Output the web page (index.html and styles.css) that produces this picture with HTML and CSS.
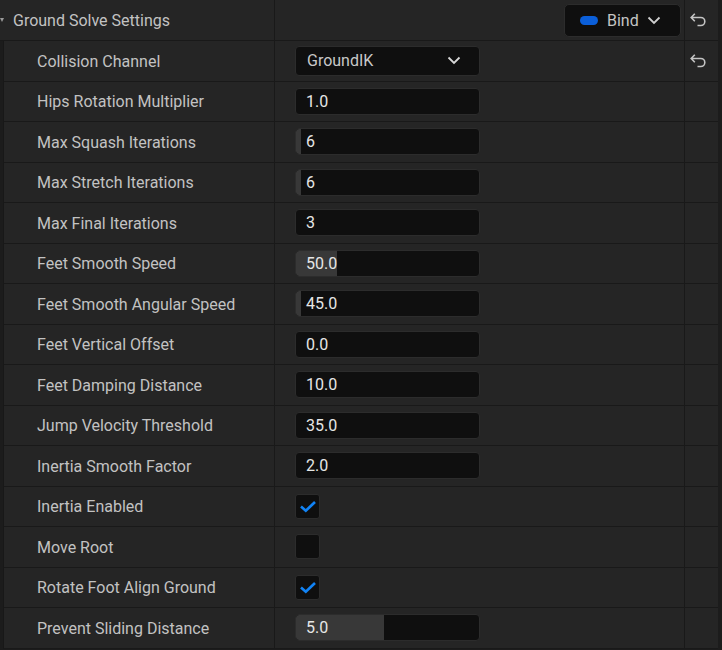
FILE: index.html
```html
<!DOCTYPE html>
<html>
<head>
<meta charset="utf-8">
<link rel="stylesheet" href="styles.css">
</head>
<body>
<div class="panel">
  <div class="row header">
    <div class="name-cell head-name"><span class="caret"></span>Ground Solve Settings</div>
    <div class="value-cell head-value">
      <div class="bind"><span class="pill"></span><span class="bind-text">Bind</span>
        <svg class="chev" width="14" height="9" viewBox="0 0 14 9"><path d="M1.5 1.5 L7 7 L12.5 1.5" fill="none" stroke="#d0d0d0" stroke-width="1.8"/></svg>
      </div>
    </div>
    <div class="reset-cell">
      <svg width="16" height="14" viewBox="0 0 16 14"><path d="M4.8 0.8 L1.2 4.5 L4.8 8.2 M1.2 4.5 H10.8 A4 4 0 0 1 10.8 12.5 H7.5" fill="none" stroke="#c4c4c4" stroke-width="1.6"/></svg>
    </div>
  </div>
  <div class="rows">
    <div class="row prop">
      <div class="name-cell">Collision Channel</div>
      <div class="value-cell"><div class="combo"><span>GroundIK</span>
        <svg width="14" height="9" viewBox="0 0 14 9"><path d="M1.5 1.5 L7 7 L12.5 1.5" fill="none" stroke="#d8d8d8" stroke-width="1.8"/></svg></div></div>
      <div class="reset-cell">
        <svg width="16" height="14" viewBox="0 0 16 14"><path d="M4.8 0.8 L1.2 4.5 L4.8 8.2 M1.2 4.5 H10.8 A4 4 0 0 1 10.8 12.5 H7.5" fill="none" stroke="#c4c4c4" stroke-width="1.6"/></svg>
      </div>
    </div>
    <div class="row prop"><div class="name-cell">Hips Rotation Multiplier</div><div class="value-cell"><div class="num"><span class="val">1.0</span></div></div><div class="reset-cell"></div></div>
    <div class="row prop"><div class="name-cell">Max Squash Iterations</div><div class="value-cell"><div class="num"><span class="fill" style="width:5px"></span><span class="val">6</span></div></div><div class="reset-cell"></div></div>
    <div class="row prop"><div class="name-cell">Max Stretch Iterations</div><div class="value-cell"><div class="num"><span class="fill" style="width:5px"></span><span class="val">6</span></div></div><div class="reset-cell"></div></div>
    <div class="row prop"><div class="name-cell">Max Final Iterations</div><div class="value-cell"><div class="num"><span class="val">3</span></div></div><div class="reset-cell"></div></div>
    <div class="row prop"><div class="name-cell">Feet Smooth Speed</div><div class="value-cell"><div class="num"><span class="fill" style="width:41px"></span><span class="val">50.0</span></div></div><div class="reset-cell"></div></div>
    <div class="row prop"><div class="name-cell">Feet Smooth Angular Speed</div><div class="value-cell"><div class="num"><span class="fill" style="width:5px"></span><span class="val">45.0</span></div></div><div class="reset-cell"></div></div>
    <div class="row prop"><div class="name-cell">Feet Vertical Offset</div><div class="value-cell"><div class="num"><span class="val">0.0</span></div></div><div class="reset-cell"></div></div>
    <div class="row prop"><div class="name-cell">Feet Damping Distance</div><div class="value-cell"><div class="num"><span class="val">10.0</span></div></div><div class="reset-cell"></div></div>
    <div class="row prop"><div class="name-cell">Jump Velocity Threshold</div><div class="value-cell"><div class="num"><span class="val">35.0</span></div></div><div class="reset-cell"></div></div>
    <div class="row prop"><div class="name-cell">Inertia Smooth Factor</div><div class="value-cell"><div class="num"><span class="val">2.0</span></div></div><div class="reset-cell"></div></div>
    <div class="row prop"><div class="name-cell">Inertia Enabled</div><div class="value-cell"><div class="check">
      <svg width="18" height="13" viewBox="0 0 18 13"><path d="M2 6.5 L6.8 10.8 L16 2" fill="none" stroke="#1183f5" stroke-width="2.6"/></svg></div></div><div class="reset-cell"></div></div>
    <div class="row prop"><div class="name-cell">Move Root</div><div class="value-cell"><div class="check"></div></div><div class="reset-cell"></div></div>
    <div class="row prop"><div class="name-cell">Rotate Foot Align Ground</div><div class="value-cell"><div class="check">
      <svg width="18" height="13" viewBox="0 0 18 13"><path d="M2 6.5 L6.8 10.8 L16 2" fill="none" stroke="#1183f5" stroke-width="2.6"/></svg></div></div><div class="reset-cell"></div></div>
    <div class="row prop"><div class="name-cell">Prevent Sliding Distance</div><div class="value-cell"><div class="num"><span class="fill" style="width:88px"></span><span class="val">5.0</span></div></div><div class="reset-cell"></div></div>
  </div>
</div>
</body>
</html>
```
FILE: styles.css
```css
html, body {
  margin: 0;
  padding: 0;
  background: #1c1c1c;
}
body {
  font-family: Roboto, "Liberation Sans", sans-serif;
  font-size: 16px;
  color: #c2c2c2;
  width: 722px;
  height: 650px;
  overflow: hidden;
}
.panel {
  width: 722px;
  background: #1c1c1c;
}
.row {
  display: grid;
  grid-template-columns: 275px 410px 33px;
  border-bottom: 1px solid #191919;
  background: #252525;
  margin-right: 4px;
}
.header {
  height: 40px;
}
.rows {
  padding-left: 3px;
  background: #1c1c1c;
}
.prop {
  height: 39.5px;
  grid-template-columns: 271px 410px 33px;
  border-left: 1px solid #181818;
}
.prop .name-cell {
  padding-top: 1px;
}
.name-cell {
  display: flex;
  align-items: center;
  border-right: 1px solid #191919;
  padding-left: 33px;
  white-space: nowrap;
}
.head-name {
  padding-left: 13px;
  position: relative;
}
.caret {
  position: absolute;
  left: 0;
  top: 18px;
  width: 0;
  height: 0;
  border-left: 2.5px solid transparent;
  border-right: 2.5px solid transparent;
  border-top: 4px solid #9a9a9a;
}
.value-cell {
  display: flex;
  align-items: center;
  border-right: 1px solid #191919;
  padding-left: 20px;
}
.head-value {
  justify-content: flex-end;
  padding-left: 0;
  padding-right: 3px;
}
.reset-cell {
  display: flex;
  align-items: center;
  justify-content: center;
  padding-right: 7px;
}
.bind {
  width: 117px;
  height: 33px;
  box-sizing: border-box;
  background: #0f0f0f;
  border: 1px solid #2c2c2c;
  border-radius: 5px;
  display: flex;
  align-items: center;
  padding-left: 15px;
  color: #c4c4c4;
  font-size: 16px;
}
.pill {
  width: 18px;
  height: 9px;
  border-radius: 5px;
  background: #0b5fd9;
  margin-right: 9px;
}
.bind-text {
  margin-right: 8px;
}
.combo {
  width: 185px;
  height: 30px;
  box-sizing: border-box;
  background: #0f0f0f;
  border: 1px solid #2c2c2c;
  border-radius: 4px;
  display: flex;
  align-items: center;
  justify-content: space-between;
  padding: 0 18px 0 11px;
  color: #c8c8c8;
}
.num {
  position: relative;
  width: 185px;
  height: 27px;
  box-sizing: border-box;
  background: #0f0f0f;
  border: 1px solid #2c2c2c;
  border-radius: 4px;
  display: flex;
  align-items: center;
  overflow: hidden;
}
.fill {
  position: absolute;
  left: 0;
  top: 0;
  bottom: 0;
  background: #383838;
  border-radius: 3px 0 0 3px;
}
.val {
  position: relative;
  padding-left: 10px;
  color: #e6e6e6;
}
.check {
  width: 25px;
  height: 25px;
  box-sizing: border-box;
  background: #0f0f0f;
  border: 1px solid #2c2c2c;
  border-radius: 3px;
  display: flex;
  align-items: center;
  justify-content: center;
}
```
